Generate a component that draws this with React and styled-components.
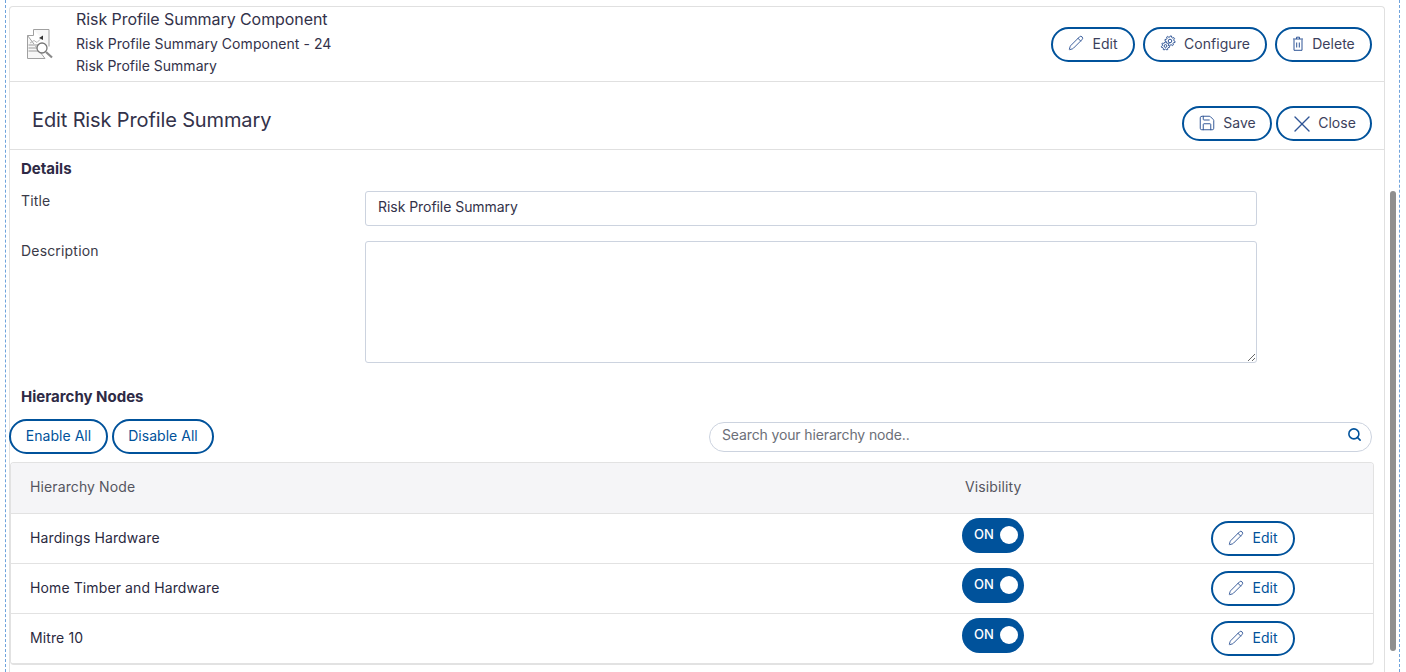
import React from 'react';
import styled, { createGlobalStyle } from 'styled-components';
import { Pencil, Save, X, Search } from 'lucide-react';

const Global = createGlobalStyle`
  html, body { margin: 0; padding: 0; background: #fff; height: 672px; overflow: hidden; }
  * { box-sizing: border-box; }
  body { font-family: Inter, "Liberation Sans", sans-serif; font-size: 14px; color: #2b2a3f; }
`;

const Frame = styled.div`
  position: relative;
  margin-left: 5px;
  width: 1395px;
  height: 672px;
  padding: 6px 14px 0 3px;
  border-left: 1px dashed #6fa3dc;
  border-right: 1px dashed #6fa3dc;
  overflow: hidden;
`;
const Card = styled.div`
  border: 1px solid #e0e0e0;
  border-bottom: 0;
  border-radius: 4px 4px 0 0;
  width: 1376px;
  height: 700px;
`;
const TopBar = styled.header`
  display: flex;
  align-items: center;
  height: 75px;
  padding: 0 12px 0 17px;
  border-bottom: 1px solid #e0e0e0;
`;
const DocIcon = styled.svg`
  width: 28px;
  height: 32px;
  flex: none;
  margin-right: 21px;
`;
const Names = styled.div`
  flex: 1;
  display: flex;
  flex-direction: column;
  margin-top: -3px;
`;
const Name = styled.div`
  font-size: ${p => p.$size || 14}px;
  line-height: 22px;
  height: ${p => p.$h || 22}px;
  color: #33324a;
  letter-spacing: ${p => p.$ls || 0}px;
  white-space: nowrap;
`;
const Actions = styled.div`
  display: flex;
  gap: ${p => p.$gap || 8}px;
`;
const Pill = styled.button`
  display: inline-flex;
  align-items: center;
  justify-content: center;
  gap: ${p => p.$gap || 8}px;
  width: ${p => p.$w}px;
  height: 35px;
  padding: 0 0 2px;
  border: 2px solid #00529b;
  border-radius: 18px;
  background: #fff;
  font: 400 14px Inter, "Liberation Sans", sans-serif;
  letter-spacing: 0.03px;
  color: ${p => p.$blue ? '#00529b' : '#3c3f5c'};
  svg { flex: none; color: #2f5596; }
`;
const CloseIcon = styled(X)`
  margin: 2px -4px 0;
`;
const EditHead = styled.div`
  display: flex;
  align-items: flex-end;
  justify-content: space-between;
  height: 68px;
  padding: 0 12px 8px 22px;
  border-bottom: 1px solid #e0e0e0;
`;
const EditTitle = styled.h1`
  margin: 0 0 9px;
  font-size: 20px;
  line-height: 24px;
  font-weight: 400;
  color: #33324a;
  letter-spacing: -0.13px;
`;
const Body = styled.div`
  padding: 0 11px;
`;
const Section = styled.h2`
  margin: ${p => p.$mt}px 0 0;
  font-size: 15px;
  line-height: 18px;
  font-weight: 700;
  color: #2e2a45;
`;
const Field = styled.div`
  display: grid;
  grid-template-columns: 344px 892px;
  margin-top: ${p => p.$mt}px;
`;
const Label = styled.label`
  font-size: 14px;
  line-height: 20px;
  letter-spacing: 0.18px;
  color: #3a3a48;
`;
const TextInput = styled.input`
  height: 35px;
  padding: 0 12px 5px;
  border: 1px solid #ccd3df;
  border-radius: 3px;
  font: 400 14px Inter, "Liberation Sans", sans-serif;
  letter-spacing: -0.05px;
  color: #33324a;
`;
const TextArea = styled.textarea`
  display: block;
  height: 122px;
  border: 1px solid #ccd3df;
  border-radius: 3px;
  background: #fff;
`;
const Tools = styled.div`
  display: flex;
  align-items: center;
  gap: 4px;
  margin: 13px 0 8px -12px;
  width: 1363px;
`;
const SearchBox = styled.div`
  margin-left: auto;
  display: flex;
  align-items: center;
  justify-content: space-between;
  width: 663px;
  height: 30px;
  padding: 0 9px 4px 12px;
  border: 1px solid #ccd3df;
  border-radius: 15px;
  font-size: 14px;
  letter-spacing: -0.13px;
  color: #6c6f78;
  svg { color: #00529b; }
`;
const Table = styled.div`
  margin-left: -11px;
  width: 1364px;
  border: 1px solid #e2e2e2;
  border-bottom-width: 2px;
  border-radius: 4px;
  overflow: hidden;
`;
const Row = styled.div`
  display: grid;
  grid-template-columns: 935px 246px 1fr;
  height: ${p => p.$head ? 51 : p.$last ? 49 : 50}px;
  background: ${p => p.$head ? '#f5f5f7' : '#fff'};
  border-bottom: ${p => p.$last ? 0 : '1px solid #e2e2e2'};
  color: ${p => p.$head ? '#55555f' : '#2b2a3f'};
`;
const Cell = styled.div`
  padding: 0 0 ${p => p.$head ? 4 : 2}px 19px;
  display: flex;
  align-items: center;
  font-size: 14px;
  letter-spacing: 0.11px;
`;
const ControlCell = styled.div`
  padding-left: 19px;
  display: flex;
  align-items: center;
`;
const Toggle = styled.div`
  width: 62px;
  height: 35px;
  margin: -7px 0 0 -3px;
  display: flex;
  align-items: center;
  justify-content: space-between;
  padding: 0 6px 0 12px;
  border-radius: 18px;
  background: #00529b;
  color: #fff;
  font-size: 13px;
  font-weight: 500;
`;
const ToggleText = styled.span`
  position: relative;
  top: -1px;
`;
const Knob = styled.span`
  width: 18px;
  height: 18px;
  border-radius: 50%;
  background: #fff;
`;
const Scrollbar = styled.div`
  position: absolute;
  left: 1384px;
  top: 191px;
  width: 6px;
  height: 460px;
  border-radius: 3px;
  background: #8f8f8f;
`;

const rows = ['Hardings Hardware', 'Home Timber and Hardware', 'Mitre 10'];

const gearPath = (cx, cy, r, teeth) => {
  const pts = [];
  const n = teeth * 4;
  for (let i = 0; i < n; i++) {
    const a = ((i + 0.5) / n) * Math.PI * 2;
    const rad = i % 4 < 2 ? r : r * 0.74;
    pts.push(`${(cx + Math.cos(a) * rad).toFixed(2)} ${(cy + Math.sin(a) * rad).toFixed(2)}`);
  }
  return `M${pts.join('L')}Z`;
};

const GearsIcon = () => (
  <svg width="16" height="16" viewBox="0 0 16 16" fill="none" stroke="currentColor" strokeWidth="1">
    <path d={gearPath(10, 6, 5.2, 8)} />
    <circle cx="10" cy="6" r="1.8" />
    <path d={gearPath(5.5, 11, 4.2, 7)} fill="#fff" />
    <circle cx="5.5" cy="11" r="1.4" />
  </svg>
);

const BinIcon = () => (
  <svg width="12" height="15" viewBox="0 0 12 15" fill="none" stroke="currentColor" strokeWidth="1">
    <path d="M1 3h10M4.5 3V1.2h3V3M2 3.5v10.8h8V3.5" />
    <path d="M4.7 6.5v5M7.3 6.5v5" />
  </svg>
);

export default function App() {
  return (
    <Frame>
      <Global />
      <Card>
        <TopBar>
          <DocIcon viewBox="0 0 28 32" fill="none" stroke="#a0a0a0" strokeWidth="1">
            <path d="M6.5 1.5H22v17M18 30.5H.5V7.5z" fill="#f7f7f7" />
            <path d="M.5 7.5h6v-6" />
            <path d="M3 15l4-2.5 3 2 3-3" stroke="#b5b5b5" />
            <path d="M12 10l4-2.5V12z" fill="#333" stroke="none" />
            <path d="M1.5 17h12M1.5 20h10M1.5 23h10" stroke="#c9c9c9" strokeWidth="2" />
            <circle cx="15" cy="20" r="5" fill="#fff" stroke="#777" strokeWidth="1.3" />
            <path d="M19 24l6 5.5" stroke="#8a8a8a" strokeWidth="2.2" />
          </DocIcon>
          <Names>
            <Name $size={16} $h={25} $ls={-0.07}>Risk Profile Summary Component</Name>
            <Name $ls={0.05}>Risk Profile Summary Component - 24</Name>
            <Name>Risk Profile Summary</Name>
          </Names>
          <Actions>
            <Pill $w={84}><Pencil size={16} strokeWidth={1.4} />Edit</Pill>
            <Pill $w={124}><GearsIcon />Configure</Pill>
            <Pill $w={97}><BinIcon />Delete</Pill>
          </Actions>
        </TopBar>
        <EditHead>
          <EditTitle>Edit Risk Profile Summary</EditTitle>
          <Actions $gap={4}>
            <Pill $w={90} $gap={7}><Save size={18} strokeWidth={1.3} />Save</Pill>
            <Pill $w={96} $gap={6}><CloseIcon size={28} strokeWidth={1.2} />Close</Pill>
          </Actions>
        </EditHead>
        <Body>
          <Section $mt={10}>Details</Section>
          <Field $mt={13}>
            <Label>Title</Label>
            <TextInput readOnly value="Risk Profile Summary" />
          </Field>
          <Field $mt={15}>
            <Label>Description</Label>
            <TextArea readOnly />
          </Field>
          <Section $mt={25}>Hierarchy Nodes</Section>
          <Tools>
            <Pill $w={99} $blue>Enable All</Pill>
            <Pill $w={102} $blue>Disable All</Pill>
            <SearchBox>
              Search your hierarchy node..
              <Search size={15} strokeWidth={2.5} />
            </SearchBox>
          </Tools>
          <Table>
            <Row $head>
              <Cell $head>Hierarchy Node</Cell>
              <Cell $head>Visibility</Cell>
              <Cell $head />
            </Row>
            {rows.map((r, i) => (
              <Row key={r} $last={i === rows.length - 1}>
                <Cell>{r}</Cell>
                <ControlCell>
                  <Toggle><ToggleText>ON</ToggleText><Knob /></Toggle>
                </ControlCell>
                <ControlCell>
                  <Pill $w={84} $blue><Pencil size={16} strokeWidth={1.4} />Edit</Pill>
                </ControlCell>
              </Row>
            ))}
          </Table>
        </Body>
      </Card>
      <Scrollbar />
    </Frame>
  );
}
